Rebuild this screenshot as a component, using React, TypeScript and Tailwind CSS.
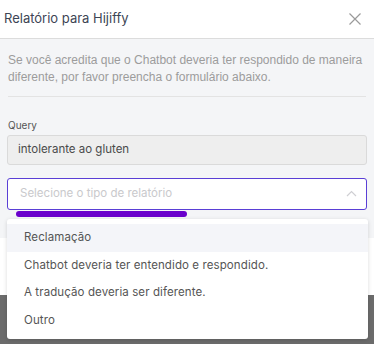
import React from "react";

const options = [
  "Reclamação",
  "Chatbot deveria ter entendido e respondido.",
  "A tradução deveria ser diferente.",
  "Outro",
];

export default function App() {
  return (
    <div className="relative w-[374px] h-[344px] bg-[#6b6b6b] overflow-hidden font-['Inter',sans-serif]">
      <div className="flex flex-col w-full">
        <div className="h-[39px] bg-white flex items-center justify-between pl-[4px] pr-[13px] border-b border-[#dcdcdc]">
          <span className="text-[13px] text-[#3d4555]">Relatório para Hijiffy</span>
          <svg width="12" height="12" viewBox="0 0 12 12" className="text-[#9a9a9a]">
            <path d="M0.5 0.5L11.5 11.5M11.5 0.5L0.5 11.5" stroke="currentColor" strokeWidth="1.2" />
          </svg>
        </div>
        <div className="bg-[#f4f5f7] px-[7px] pt-[13px] h-[199px]">
          <p className="px-[1px] text-[12px] leading-[17px] text-[#9c9c9c] font-['Liberation_Sans',sans-serif]">
            Se você acredita que o Chatbot deveria ter respondido de maneira diferente, por favor preencha o formulário abaixo.
          </p>
          <div className="mt-[10px] border-t border-[#e3e3e3] mx-[1px]" />
          <div className="mt-[21px] text-[10px] leading-[15px] text-[#555] px-[1px]">Query</div>
          <div className="mt-[1.5px] h-[30px] bg-[#eeeeee] border border-[#dadada] rounded-[3px] flex items-center px-[10px] text-[11.5px] text-[#4a4a4a]">
            intolerante ao gluten
          </div>
          <div className="mt-[13px] h-[32px] bg-white border-[1.5px] border-[#5a3fd6] rounded-[3px] flex items-center justify-between pl-[12px] pr-[9px] text-[11.5px] text-[#c9c9cc]">
            <span>Selecione o tipo de relatório</span>
            <svg width="11" height="7" viewBox="0 0 11 7">
              <path d="M1 6L5.5 1.5L10 6" stroke="#cfcfd3" strokeWidth="1.2" fill="none" />
            </svg>
          </div>
        </div>
        <div className="bg-white h-[57px]" />
      </div>
      <div className="absolute left-[16px] top-[211px] w-[171px] h-[6px] rounded-full bg-[#6a00cc]" />
      <div className="absolute left-[7px] top-[219px] w-[361px] bg-white rounded-[3px] shadow-[0_1px_4px_rgba(0,0,0,0.15)] py-[5px]">
        {options.map((o, i) => (
          <div
            key={o}
            className={`h-[27.5px] flex items-center px-[17px] text-[11.5px] text-[#555] tracking-[0.1px] ${i === 0 ? "bg-[#f4f5f9]" : ""}`}
          >
            {o}
          </div>
        ))}
      </div>
    </div>
  );
}
